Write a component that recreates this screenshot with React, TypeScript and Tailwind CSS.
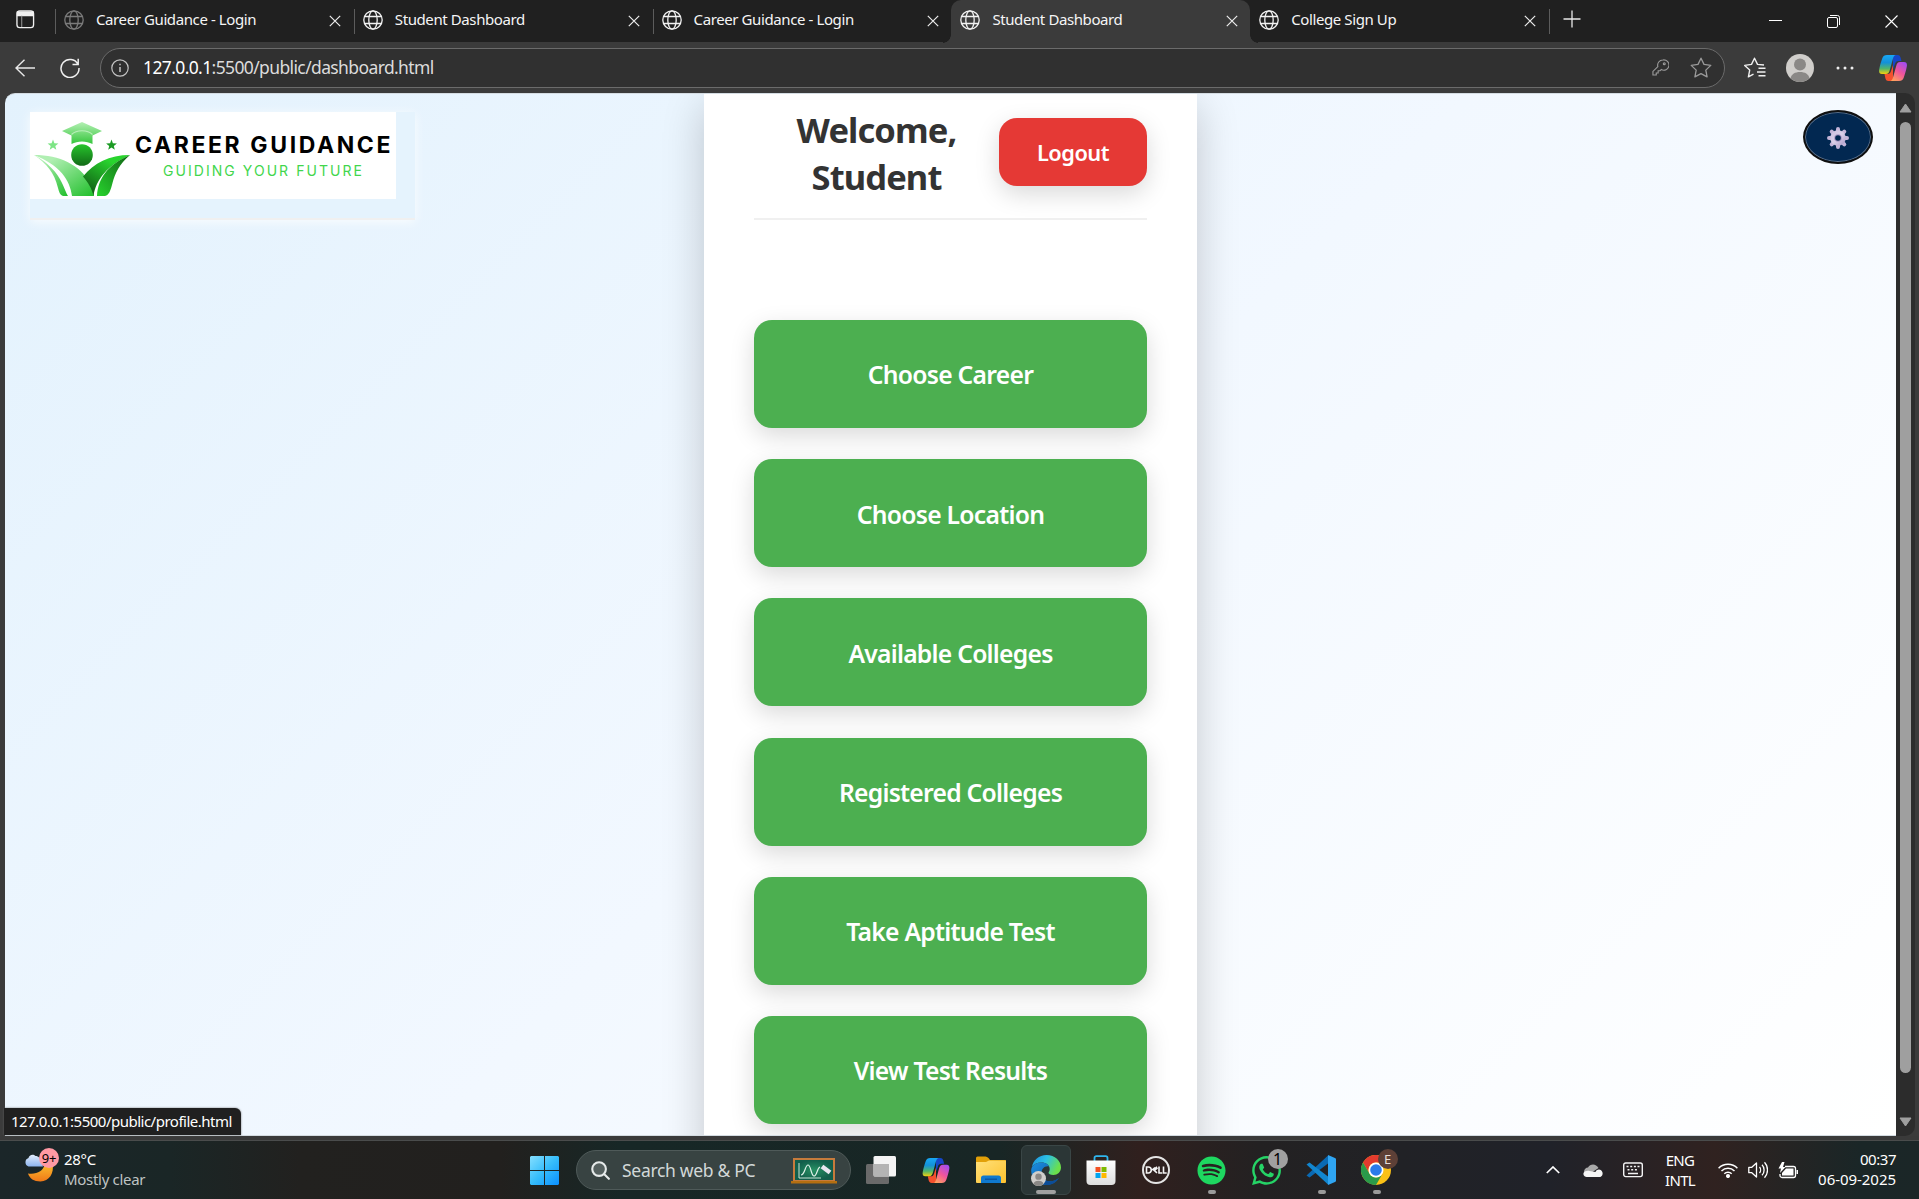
import type { ReactNode } from "react";
import { FaSpotify, FaWhatsapp } from "react-icons/fa";

function Globe({ className = "" }: { className?: string }) {
  return (
    <svg viewBox="0 0 20 20" className={"size-5 shrink-0 " + className} fill="none" stroke="currentColor" strokeWidth="1.3">
      <circle cx="10" cy="10" r="9.2" />
      <ellipse cx="10" cy="10" rx="4.2" ry="9.2" />
      <path d="M1.7 6.5h16.6M1.7 13.5h16.6" />
    </svg>
  );
}

function Cross({ className = "" }: { className?: string }) {
  return (
    <svg viewBox="0 0 12 12" className={"size-3 shrink-0 " + className} fill="none" stroke="#ececec" strokeWidth="1.2">
      <path d="M.8.8 11.2 11.2M11.2.8.8 11.2" />
    </svg>
  );
}

function Tab({ title, active, dim, divider }: { title: string; active?: boolean; dim?: boolean; divider?: boolean }) {
  return (
    <div className={active ? "relative flex h-[43px] w-[298.8px] items-start rounded-t-[10px] bg-[#3b3b3b] pt-[10px] pl-[9px]" : "relative flex h-[42px] w-[298.8px] items-start pt-[10px] pl-[9px]"}>
      {divider && <span className="absolute top-[9px] left-0 h-[25px] w-px bg-[#5c5c5c]" />}
      {active && (
        <>
          <span className="absolute bottom-0 -left-2 size-2 bg-[radial-gradient(circle_at_0_0,#202020_7.5px,#3b3b3b_8px)]" />
          <span className="absolute -right-2 bottom-0 size-2 bg-[radial-gradient(circle_at_100%_0,#202020_7.5px,#3b3b3b_8px)]" />
        </>
      )}
      <Globe className={dim ? "text-[#7b7b7b]" : "text-[#f2f2f2]"} />
      <span className="mt-[-2px] ml-3 text-[15px] leading-[22px] tracking-[-0.4px] text-[#f5f5f5]">{title}</span>
      <Cross className="mt-[5px] mr-[12.500px] ml-auto" />
    </div>
  );
}

function Copilot({ className = "", id }: { className?: string; id: string }) {
  return (
    <svg viewBox="0 0 28 26" className={className}>
      <defs>
        <linearGradient id={id + "a"} x1="0" y1="0" x2="0" y2="1">
          <stop offset="0" stopColor="#18a8f5" />
          <stop offset=".4" stopColor="#1490d8" />
          <stop offset=".72" stopColor="#52b56a" />
          <stop offset="1" stopColor="#f5d00d" />
        </linearGradient>
        <linearGradient id={id + "b"} x1=".8" y1="0" x2=".2" y2="1">
          <stop offset="0" stopColor="#a34cf0" />
          <stop offset=".5" stopColor="#f0559a" />
          <stop offset="1" stopColor="#ffa45c" />
        </linearGradient>
      </defs>
      <path d="M14 0h4.5c2 0 2.7 1.2 3.200 3l.8 3h-3c-2 0-3 1-3.500 3L14 14z" fill="#1646c8" />
      <path d="M14 26H9.500c-2 0-2.700-1.200-3.200-3l-.8-4h3c2 0 3-1 3.500-3L14 10z" fill="#f4512e" />
      <path d="M8 0h9c-1.500 0-2.400 1.400-3 3.500L10.800 15c-.7 2.500-1.600 4-4 4H3C.5 19-.3 17.200.2 14.500 1 10 2.200 6.500 3.300 3.300 4.200 1 5.500 0 8 0z" fill={"url(#" + id + "a)"} />
      <path d="M20 26h-9c1.500 0 2.400-1.400 3-3.500L17.200 11c.7-2.500 1.600-4 4-4H25c2.500 0 3.300 1.800 2.800 4.500-.8 4.500-2 8-3.100 11.200C23.800 25 22.500 26 20 26z" fill={"url(#" + id + "b)"} />
    </svg>
  );
}

function Person({ className = "" }: { className?: string }) {
  return (
    <svg viewBox="0 0 28 28" className={className}>
      <circle cx="14" cy="14" r="14" fill="#d0cecb" />
      <circle cx="14" cy="10.500" r="6" fill="#8a8886" />
      <path d="M4.500 24.200C5.500 20 9 18 14 18s8.500 2 9.500 6.200A14 14 0 0 1 14 28a14 14 0 0 1-9.500-3.800z" fill="#8a8886" />
    </svg>
  );
}

function BrandMark() {
  return (
    <svg viewBox="0 0 98 76" className="h-[76px] w-[98px] shrink-0">
      <defs>
        <linearGradient id="capg" x1="0" y1="0" x2="0" y2="1"><stop stopColor="#b4f0b4" /><stop offset="1" stopColor="#35c63c" /></linearGradient>
        <linearGradient id="headg" x1="0" y1="0" x2="0" y2="1"><stop stopColor="#27c42c" /><stop offset="1" stopColor="#126a17" /></linearGradient>
        <linearGradient id="leafl" x1="0" y1="0" x2="1" y2="1"><stop offset=".2" stopColor="#b0efb2" /><stop offset="1" stopColor="#20bf2b" /></linearGradient>
        <linearGradient id="leafr" x1="1" y1="0" x2=".3" y2="1"><stop offset=".3" stopColor="#29d42e" /><stop offset="1" stopColor="#116015" /></linearGradient>
        <linearGradient id="leafo" x1="0" y1="1" x2="1" y2="0"><stop stopColor="#27d32d" /><stop offset="1" stopColor="#126516" /></linearGradient>
      </defs>
      <path d="M48 1 68 10 58.500 14.500v8.500c-6-3.500-15-3.500-21 0V14.500L28 10z" fill="url(#capg)" />
      <path d="M37.500 13.500c5-5 16-5 21 0" fill="none" stroke="#b8f0b8" strokeWidth="1.200" />
      <circle cx="48" cy="34" r="10.800" fill="url(#headg)" />
      <path d="m19 18.500 1.400 3.700 4 .2-3.100 2.500 1 3.900-3.300-2.200-3.300 2.200 1-3.900-3.100-2.500 4-.2z" fill="#7de585" />
      <path d="m77.500 18.500 1.400 3.700 4 .2-3.100 2.500 1 3.900-3.300-2.200-3.300 2.200 1-3.900-3.100-2.500 4-.2z" fill="#1c9b25" />
      <path d="M0 34c15 8 23 18 27.500 27 3.500 7 4.500 11 6.500 14h-5c-3-1-4-4-5-8C20 51 13 43 0 34z" fill="url(#leafl)" />
      <path d="M0 34c26 0 46 10 56 28 2.500 5 3.500 9 4 13H38C36 59 26 44 0 34z" fill="url(#leafl)" />
      <path d="M96 34C75 34 60 42 49 55.500c5 6 9 12 10.500 19.500C62 58 74 44 96 34z" fill="url(#leafr)" />
      <path d="M96 34C85 43 81 53 78.500 62c-2 8-3.500 12-7.500 13h-8c1-17 10-31 33-41z" fill="url(#leafo)" />
    </svg>
  );
}

function Gear() {
  return (
    <svg viewBox="-11 -11 22 22" className="mt-[2px] size-[22px]">
      <defs><linearGradient id="gear" x1="0" y1="0" x2="1" y2="1"><stop stopColor="#cdbfe0" /><stop offset=".5" stopColor="#d9cfe8" /><stop offset="1" stopColor="#a795c3" /></linearGradient></defs>
      <g stroke="#c3b4d8" strokeWidth="4" strokeLinecap="round">
        <path d="M0-9V9M-9 0H9M-6.300-6.300 6.300 6.300M6.300-6.300-6.300 6.300" />
      </g>
      <circle r="7.800" fill="url(#gear)" />
      <circle r="3.800" fill="#a997c5" />
      <circle r="2.800" fill="#022851" />
    </svg>
  );
}

function Cell({ children, running }: { children: ReactNode; running?: boolean }) {
  return (
    <div className="relative flex h-[50px] w-[55px] shrink-0 items-center justify-center">
      {children}
      {running && <span className="absolute bottom-px left-[24px] h-1 w-2 rounded-full bg-[#9a9a9a]" />}
    </div>
  );
}

function WindowsLogo() {
  return (
    <svg viewBox="0 0 29 29" className="size-[29px]">
      <defs><linearGradient id="win" x1="0" y1="0" x2="1" y2="1"><stop stopColor="#85dfff" /><stop offset=".5" stopColor="#36bdfb" /><stop offset="1" stopColor="#0a8fff" /></linearGradient></defs>
      <path d="M1 0h13v14H0V1zM15 0h13l1 1v13H15zM0 15h14v14H1l-1-1zM15 15h14v13l-1 1H15z" fill="url(#win)" />
    </svg>
  );
}

function Chalkboard() {
  return (
    <svg viewBox="0 0 46 27" className="h-[27px] w-[46px]">
      <defs><radialGradient id="cb"><stop stopColor="#279063" /><stop offset="1" stopColor="#125e4b" /></radialGradient></defs>
      <path d="M2 1h42v23H2z" fill="#c77b3c" />
      <path d="M4 3h38v20H4z" fill="url(#cb)" />
      <path d="M8 6v15h22" fill="none" stroke="#c8e5d7" />
      <path d="M10 18c4 0 4-10 7-10s3 11 6 11 3-8 6-9" fill="none" stroke="#dff1e8" strokeWidth="1.200" />
      <path d="m31 9.500 8 6" stroke="#e9e6f0" strokeWidth="4.500" />
      <path d="M0 24h46v2.500H0z" fill="#b56f10" />
    </svg>
  );
}

function Folder() {
  return (
    <svg viewBox="0 0 30 28" className="h-7 w-[30px]">
      <defs><linearGradient id="fold" x1="0" y1="0" x2="1" y2="1"><stop stopColor="#ffe07a" /><stop offset="1" stopColor="#fdc22e" /></linearGradient></defs>
      <path d="M0 2a1.500 1.500 0 0 1 1.500-1.500h8c1 0 2 .5 3 1.500l1.500 2h15a1 1 0 0 1 1 1v5H0z" fill="#e2a008" />
      <path d="M0 6h10l3-1.500h17V26a1 1 0 0 1-1 1H1a1 1 0 0 1-1-1z" fill="url(#fold)" />
      <path d="M5 27v-5a2.500 2.500 0 0 1 2.500-2.500h15A2.500 2.500 0 0 1 25 22v5z" fill="#0f79ce" />
      <path d="M9 23.200h12" stroke="#0a4f98" strokeWidth="1.200" />
    </svg>
  );
}

function Edge() {
  return (
    <svg viewBox="0 0 30 30" className="size-[30px]">
      <defs>
        <linearGradient id="e1" x1="0" y1="0" x2="1" y2=".4"><stop stopColor="#1b8de0" /><stop offset=".5" stopColor="#2cc0e4" /><stop offset="1" stopColor="#6be04b" /></linearGradient>
        <linearGradient id="e2" x1="0" y1="0" x2="1" y2="1"><stop stopColor="#1b8fe0" /><stop offset="1" stopColor="#0b4f9f" /></linearGradient>
      </defs>
      <path d="M1 12C2 5 8 0 15.500 0 24 0 30 6 30 12.500c0 4.500-3.500 7.500-7.500 7.500-3.500 0-5-1.200-5-2.200 0-.8 1.200-1.500 1.200-3.800C18.700 10 15 7.500 10.500 7.500 6 7.500 2.500 9.500 1 12z" fill="url(#e1)" />
      <path d="M.2 16C0 10.500 5 7.500 10.500 7.500c3.500 0 6.500 1.500 7.500 4-4-1-7.500 2-7.500 6.500 0 7 8 12 17.500 5-3 4.500-7.500 7-12.500 7C6.500 30 .5 24 .2 16z" fill="url(#e2)" />
      <path d="M10.500 18c0 7 8 12 17.500 5-3 4.500-7.500 7-12.500 7-4 0-8-6-5-12z" fill="#0c4d97" />
    </svg>
  );
}

function Store() {
  return (
    <svg viewBox="0 0 30 30" className="size-[30px]">
      <defs><linearGradient id="st" x1="0" y1="0" x2="0" y2="1"><stop stopColor="#fff" /><stop offset="1" stopColor="#dedede" /></linearGradient></defs>
      <path d="M8.500 6V3a1.800 1.800 0 0 1 1.800-1.800h9.400A1.800 1.800 0 0 1 21.500 3v3" fill="none" stroke="#2fb6ee" strokeWidth="1.800" />
      <path d="M.5 5.500h29V26a4 4 0 0 1-4 4h-21a4 4 0 0 1-4-4z" fill="url(#st)" />
      <path d="M9.500 12h5v5h-5z" fill="#f25022" /><path d="M15.500 12h5v5h-5z" fill="#7fba00" />
      <path d="M9.500 18h5v5h-5z" fill="#00a4ef" /><path d="M15.500 18h5v5h-5z" fill="#ffb900" />
    </svg>
  );
}

function VsCode() {
  return (
    <svg viewBox="0 0 30 30" className="size-[30px]">
      <path d="M.5 20.500 22 .5v8L3.500 22.500z" fill="#0a6ab4" />
      <path d="M.5 9.500 22 29.500v-8L3.500 7.500z" fill="#1286cf" />
      <path d="M22 0l7 3a1.500 1.500 0 0 1 1 1.500v21a1.500 1.500 0 0 1-1 1.500l-7 3z" fill="#2fa5f2" />
    </svg>
  );
}

function Chrome() {
  return (
    <svg viewBox="0 0 30 30" className="size-[30px]">
      <circle cx="15" cy="15" r="15" fill="#fbc116" />
      <path d="M2 7.500A15 15 0 0 1 28 7.500H15A7.500 7.500 0 0 0 8.500 18.800z" fill="#e33b2e" />
      <path d="M2 7.500A15 15 0 0 0 15 30l6.500-11.200A7.500 7.500 0 0 1 8.500 18.800z" fill="#2a9a4a" />
      <circle cx="15" cy="15" r="7.500" fill="#fff" />
      <circle cx="15" cy="15" r="5.800" fill="#2b7bea" />
    </svg>
  );
}

function Weather() {
  return (
    <svg viewBox="0 0 36 36" className="h-9 w-9">
      <defs>
        <linearGradient id="moon" x1="0" y1="0" x2="0" y2="1"><stop stopColor="#fbbd2c" /><stop offset="1" stopColor="#f07818" /></linearGradient>
        <linearGradient id="cloud" x1="0" y1="0" x2="0" y2="1"><stop stopColor="#e2edfc" /><stop offset="1" stopColor="#8db4ee" /></linearGradient>
      </defs>
      <path d="M3 24.500c9 1 15-2 17-9.500h7.500c2 9-3.500 17.500-12 17.500C9 32.500 4.500 29.500 3 24.500z" fill="url(#moon)" />
      <path d="M3.500 17.500a4.500 4.500 0 0 1 0-8.500C4 6 8 4.500 10.500 7c3 0 5 2 7.500 10.500z" fill="url(#cloud)" />
    </svg>
  );
}

const actions = ["Choose Career", "Choose Location", "Available Colleges", "Registered Colleges", "Take Aptitude Test", "View Test Results"];

export default function App() {
  return (
    <div className="flex h-[1199px] w-[1919px] flex-col overflow-hidden bg-[#3b3b3b] font-['Noto_Sans',sans-serif] whitespace-nowrap">
      <div className="flex h-[42px] shrink-0 items-start bg-[#202020]">
        <svg viewBox="0 0 20 20" className="mt-[10px] ml-4 size-[19px]" fill="none" stroke="#f0f0f0" strokeWidth="1.400">
          <rect x="1" y="1" width="17.500" height="17.500" rx="3" />
          <path d="M1.500 2h16.500v4H1.500z" fill="#f0f0f0" />
          <path d="M6 6v12" stroke="#8a8a8a" strokeWidth="1.200" />
        </svg>
        <div className="ml-5 flex">
          <Tab title="Career Guidance - Login" dim divider />
          <Tab title="Student Dashboard" divider />
          <Tab title="Career Guidance - Login" divider />
          <Tab title="Student Dashboard" active />
          <Tab title="College Sign Up" />
        </div>
        <span className="mt-[9px] h-[25px] w-px bg-[#5c5c5c]" />
        <svg viewBox="0 0 18 18" className="mt-[10px] ml-[13px] size-[18px]" stroke="#e8e8e8" strokeWidth="1.300"><path d="M9 .5v17M.5 9h17" /></svg>
        <div className="mt-[15px] mr-[21px] ml-auto flex gap-[45px]">
          <svg viewBox="0 0 13 13" className="size-[13px]" stroke="#fff"><path d="M0 5.500h13" /></svg>
          <svg viewBox="0 0 13 13" className="size-[13px]" fill="none" stroke="#fff"><rect x=".5" y="2.500" width="10" height="10" rx="1.500" /><path d="M3 .5h7.500a2 2 0 0 1 2 2V10" /></svg>
          <svg viewBox="0 0 13 13" className="size-[13px]" stroke="#fff" strokeWidth="1.100"><path d="m.5.500 12 12M12.500.500.5 12.500" /></svg>
        </div>
      </div>

      <div className="flex h-[51px] shrink-0 items-center">
        <svg viewBox="0 0 20 18" className="ml-[15px] h-[18px] w-5" fill="none" stroke="#e8e8e8" strokeWidth="1.400"><path d="M20 9H1M9.500.800 1 9l8.500 8.200" /></svg>
        <svg viewBox="0 0 20 20" className="ml-[25px] size-5" fill="none" stroke="#f0f0f0" strokeWidth="1.500"><path d="M18 6.300a9 9 0 1 0 1 3.700M18.200.8v5.700h-5.700" /></svg>
        <div className="ml-5 flex h-10 w-[1625px] items-center rounded-full border border-[#6b6b6b] bg-[#303030] pl-[10px]">
          <svg viewBox="0 0 18 18" className="size-[18px]" fill="none" stroke="#c4c4c4" strokeWidth="1.200"><circle cx="9" cy="9" r="8.200" /><path d="M9 8v5M9 4.800v1.500" strokeWidth="1.500" /></svg>
          <span className="mt-[-1px] ml-[14px] text-[17.5px] leading-6 tracking-[-0.62px] text-[#dcdcdc]"><span className="text-white">127.0.0.1</span>:5500/public/dashboard.html</span>
          <svg viewBox="0 0 18 18" className="mr-[21px] ml-auto size-[17px]" fill="none" stroke="#9a9a9a" strokeWidth="1.200"><path d="M11.500 1a5.500 5.500 0 0 0-5.300 7L1 13.200V17h3.500v-2.200h2V12.500h2l1.300-1.300A5.500 5.500 0 1 0 11.500 1z" /><circle cx="13" cy="5" r="1" /></svg>
          <svg viewBox="0 0 22 21" className="mr-[12px] h-[21px] w-[22px]" fill="none" stroke="#9a9a9a" strokeWidth="1.300" strokeLinejoin="round"><path d="m11 1.200 3 6.200 6.800 1-5 4.700 1.300 6.800-6.100-3.300-6.100 3.300 1.300-6.800-5-4.700 6.800-1z" /></svg>
        </div>
        <svg viewBox="0 0 22 21" className="ml-[19px] h-[21px] w-[22px]" fill="none" stroke="#f0f0f0" strokeWidth="1.400" strokeLinejoin="round"><path d="M20 8 13.500 7.400 10.500 1.200 7.500 7.400l-6.800 1 5 4.700-1.300 6.800 5.100-2.700M14.500 11.200h7M13 15h8.500M14.500 18.800h7" /></svg>
        <Person className="ml-[20px] size-7" />
        <svg viewBox="0 0 18 4" className="ml-[22px] h-1 w-[18px]" fill="#eee"><circle cx="2" cy="2" r="1.500" /><circle cx="9" cy="2" r="1.500" /><circle cx="16" cy="2" r="1.500" /></svg>
        <Copilot id="cpt" className="ml-[25px] h-[26px] w-7" />
      </div>

      <div className="relative flex h-[1043px] shrink-0 pr-1 pl-[5px]">
        <div className="flex min-w-0 flex-1 justify-between overflow-hidden rounded-tl-[10px] border-y border-[#d4dce2] bg-[linear-gradient(135deg,#e3f2fd_0%,#f2f8ff_50%,#ffffff_100%)]">
          <div className="w-[699px] shrink-0 pt-[18px] pl-[25px]">
            <div className="h-[108px] w-[385px] border-b-2 border-[#f0f0f0] bg-[#e5f3fd] shadow-[0_2px_10px_rgba(255,255,255,0.8)]">
              <div className="flex h-[87px] w-[366px] bg-white pt-[9px] pl-1">
                <BrandMark />
                <div className="ml-[3px] flex flex-col pt-[11px] font-['Inter',sans-serif]">
                  <span className="text-[23px] leading-[26px] font-bold tracking-[2.6px] text-black">CAREER GUIDANCE</span>
                  <span className="mt-[-2px] ml-7 pt-[2px] text-[14px] leading-[25px] tracking-[2.050px] text-[#42d64c]">GUIDING YOUR FUTURE</span>
                </div>
              </div>
            </div>
          </div>
          <div className="h-[1200px] w-[493px] shrink-0 bg-white px-[50px] shadow-[0_12px_40px_rgba(0,0,0,0.2)]">
            <div className="flex h-[126px] items-start justify-between border-b-2 border-[#f0f0f0]">
              <h1 className="flex w-[245px] flex-col items-center pt-[12px] text-[34.5px] leading-[47px] font-bold tracking-[-0.9px] text-[#333]">
                <span>Welcome,</span>
                <span>Student</span>
              </h1>
              <button className="mt-6 h-[68px] w-[148px] rounded-[18px] bg-[#e53935] pt-[2px] text-[21.8px] font-semibold tracking-[-0.5px] text-white shadow-[0_8px_25px_rgba(0,0,0,0.15)]">Logout</button>
            </div>
            <div className="mt-[100px] flex flex-col gap-[31.2px]">
              {actions.map((a) => (
                <button key={a} className="h-[108px] rounded-[18px] bg-[#4caf50] pt-[2px] text-[24.7px] font-semibold tracking-[-0.75px] text-white shadow-[0_8px_25px_rgba(0,0,0,0.15)]">{a}</button>
              ))}
            </div>
          </div>
          <div className="flex w-[699px] shrink-0 justify-end pt-4 pr-[23px]">
            <button className="flex h-[54px] w-[70px] items-center justify-center rounded-[50%] border-2 border-[#101010] bg-[#022851] inset-ring inset-ring-[#5b6f88]"><Gear /></button>
          </div>
        </div>
        <div className="flex w-[19px] shrink-0 flex-col items-center rounded-r-[10px] bg-[#2c2c2c] pt-[10px] pb-[9px]">
          <svg viewBox="0 0 13 10" className="h-[10px] w-[13px]" fill="#9f9f9f" stroke="#9f9f9f" strokeLinejoin="round"><path d="M6.500 1 12 9H1z" /></svg>
          <div className="mt-[9px] h-[951px] w-[11px] rounded-full bg-[#9f9f9f]" />
          <svg viewBox="0 0 13 10" className="mt-auto h-[10px] w-[13px]" fill="#9f9f9f" stroke="#9f9f9f" strokeLinejoin="round"><path d="M6.500 9 12 1H1z" /></svg>
        </div>
        <div className="absolute bottom-px left-1 flex h-[27px] w-[237px] items-center rounded-tr-md bg-[#202020] pl-[7px] shadow-[0_0_2px_#666]">
          <span className="text-[15px] tracking-[-0.5px] text-white">127.0.0.1:5500/public/profile.html</span>
        </div>
      </div>
      <div className="h-[5px] shrink-0 border-b border-[#4a4c4c] bg-[#3a3a3a]" />

      <div className="flex h-[58px] shrink-0 items-center bg-[linear-gradient(90deg,#1b2629_0px,#1a2626_170px,#22211f_300px,#22201e_500px,#172726_620px,#182625_1000px,#30201e_1140px,#232122_1260px,#212226_1400px,#202229_1550px,#302220_1715px,#1a2627_1860px,#1b2627_1919px)] text-[15px] leading-5 tracking-[-0.3px] text-white">
        <div className="relative ml-[25px] h-[50px] w-9 pt-1">
          <Weather />
          <span className="absolute top-[3px] left-[14px] flex size-5 items-center justify-center rounded-full bg-[#ff99a4] text-[13px] text-black">9+</span>
        </div>
        <div className="mt-[-2px] ml-[3px] flex w-[466px] flex-col">
          <span>28°C</span>
          <span className="text-[#bfc3c3]">Mostly clear</span>
        </div>
        <WindowsLogo />
        <div className="mr-[2.500px] ml-[17px] flex h-10 w-[275px] shrink-0 items-center rounded-full border border-[#4f5a59] bg-[#384342] pl-[14px]">
          <svg viewBox="0 0 20 20" className="size-[19px]" fill="none" stroke="#e6eaea" strokeWidth="2.200" strokeLinecap="round"><circle cx="8.500" cy="8.500" r="7.200" fill="#55605f" /><path d="m14 14 4.800 4.800" /></svg>
          <span className="ml-3 text-[17.5px] text-[#d2d8d8]">Search web & PC</span>
          <span className="mr-[13px] ml-auto"><Chalkboard /></span>
        </div>
        <Cell>
          <svg viewBox="0 0 30 28" className="h-7 w-[30px]"><rect x="0" y="8" width="23" height="20" rx="1.500" fill="#6a6a6a" /><rect x="7.500" y="0" width="22.500" height="20.500" rx="1.500" fill="#f4f4f4" /><path d="M7.500 8H23v12.500H9A1.500 1.500 0 0 1 7.500 19z" fill="#b4b4b4" /></svg>
        </Cell>
        <Cell><Copilot id="cpb" className="h-[25px] w-7" /></Cell>
        <Cell><Folder /></Cell>
        <div className="relative mx-[2.500px] flex size-[50px] shrink-0 items-center justify-center rounded-md border border-[#3a4646] bg-[#2b3636]">
          <Edge />
          <Person className="absolute top-[25px] left-[9px] size-[15px]" />
          <span className="absolute bottom-0 left-[14px] h-1 w-5 rounded-full bg-[#a0a0a0]" />
        </div>
        <Cell><Store /></Cell>
        <Cell><div className="flex size-7 items-center justify-center rounded-full border-2 border-[#e4e4e4]"><svg viewBox="0 0 22 8" className="h-[8px] w-[22px]" fill="none" stroke="#f4f4f4" strokeWidth="1.600"><path d="M1.500 1v6h1.800a3 3 0 0 0 0-6zM12 .8 8.500 3.800 12 6.800M7 4l3-2.500M9.500 4.500l3-2.500M14 .5V7h3.200M18.500.5V7h3.200" /></svg></div></Cell>
        <Cell running><FaSpotify className="size-[29px] text-[#1ed760]" /></Cell>
        <Cell>
          <FaWhatsapp className="size-[33px] text-[#25d366]" />
          <span className="absolute top-1 left-[29px] flex size-5 items-center justify-center rounded-full bg-[#a0a0a0] text-base text-black">1</span>
        </Cell>
        <Cell running><VsCode /></Cell>
        <Cell running>
          <Chrome />
          <span className="absolute top-1 left-[29px] flex size-5 items-center justify-center rounded-full bg-[#5d4037] text-[13px] text-[#e8dcd8]">E</span>
        </Cell>
        <div className="mr-[23px] ml-auto flex items-center">
          <svg viewBox="0 0 14 8" className="h-2 w-[14px]" fill="none" stroke="#fff" strokeWidth="1.700"><path d="m.8 7 6.200-6 6.200 6" /></svg>
          <svg viewBox="0 0 20 13" className="ml-[23px] h-[13px] w-5"><path d="M1 8C1 5 3 3.500 5 3.500 7-.5 13-1 15.500 4L8 9z" fill="#a9a9a9" /><path d="M3.500 13C1 12.500 0 10.500.5 9c1-2 4-2.500 6-2l6 1c.5-3 6-4 7 .5.5 2-.5 4.500-3 4.500z" fill="#f5f5f5" /></svg>
          <svg viewBox="0 0 20 16" className="ml-5 h-4 w-5" fill="none" stroke="#f4f4f4" strokeWidth="1.400"><rect x=".7" y="1" width="18.600" height="13.600" rx="2" /><path d="M3.500 4.500h2m1.700 0h2m1.700 0h2m1.600 0h2M4.500 7.800h2m1.700 0h2m1.700 0h2M5 11.500h10" /></svg>
          <div className="mt-[-1px] ml-[17px] flex w-[40px] flex-col items-center tracking-[-0.7px]"><span>ENG</span><span>INTL</span></div>
          <svg viewBox="0 0 20 16" className="ml-[18px] h-4 w-5" fill="none" stroke="#fff" strokeWidth="1.500"><path d="M.6 6.200a13.200 13.200 0 0 1 18.800 0M3.500 9a9.200 9.200 0 0 1 13 0M6.300 11.800a5.300 5.300 0 0 1 7.400 0" /><circle cx="10" cy="14" r="1.300" fill="#fff" /></svg>
          <svg viewBox="0 0 20 18" className="ml-[10px] h-[18px] w-5" fill="none" stroke="#fff" strokeWidth="1.300" strokeLinejoin="round"><path d="M.8 6.300h3L8.500 2v14l-4.700-4.300h-3zM11.500 6c1.400 1.600 1.400 4.400 0 6M14 3.700c2.800 2.800 2.800 7.800 0 10.600M16.500 1.300c4 4.400 4 11 0 15.400" /></svg>
          <svg viewBox="0 0 20 17" className="ml-[10px] h-[17px] w-5"><path d="M7 4.500h8.500a2 2 0 0 1 2 2v7a2 2 0 0 1-2 2H4a2 2 0 0 1-2-2V12" fill="none" stroke="#fff" strokeWidth="1.300" /><path d="M8 6.500h7.500v7H4V11z" fill="#fff" /><path d="M18.500 8h1.500v4h-1.500zM4 0 .5 6.500H3L2 11l5.500-6H5L6.500 0z" fill="#fff" /></svg>
          <div className="mt-[-2px] ml-[20px] flex w-[78px] flex-col items-end"><span className="tracking-[-0.47px]">00:37</span><span className="tracking-[-0.040px]">06-09-2025</span></div>
        </div>
      </div>
    </div>
  );
}
